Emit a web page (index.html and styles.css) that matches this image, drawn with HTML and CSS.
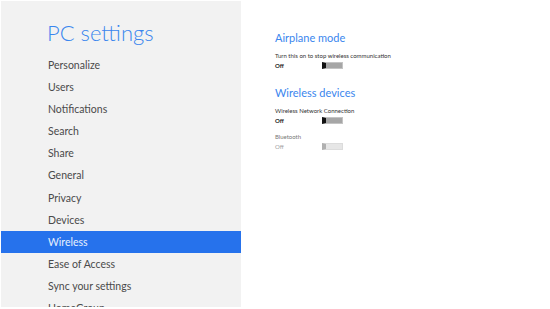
FILE: index.html
```html
<!DOCTYPE html>
<html lang="en">
<head>
    <meta charset="UTF-8">
    <title>PC settings</title>
    <link rel="stylesheet" href="styles.css">
</head>
<body>
    <div class="screen">
        <nav class="sidebar">
            <h1 class="title">PC settings</h1>
            <ul class="menu">
                <li>Personalize</li>
                <li>Users</li>
                <li>Notifications</li>
                <li>Search</li>
                <li>Share</li>
                <li>General</li>
                <li>Privacy</li>
                <li>Devices</li>
                <li class="active">Wireless</li>
                <li>Ease of Access</li>
                <li>Sync your settings</li>
                <li>HomeGroup</li>
            </ul>
        </nav>

        <main class="content">
            <h2 class="section">Airplane mode</h2>
            <div class="setting">
                <div class="label">Turn this on to stop wireless communication</div>
                <div class="row">
                    <span class="state">Off</span>
                    <span class="toggle"></span>
                </div>
            </div>

            <h2 class="section">Wireless devices</h2>
            <div class="setting">
                <div class="label">Wireless Network Connection</div>
                <div class="row">
                    <span class="state">Off</span>
                    <span class="toggle"></span>
                </div>
            </div>
            <div class="setting disabled">
                <div class="label">Bluetooth</div>
                <div class="row">
                    <span class="state">Off</span>
                    <span class="toggle"></span>
                </div>
            </div>
        </main>
    </div>
</body>
</html>
```

FILE: styles.css
```css
body {
    margin: 0;
    padding: 0;
    background-color: #ffffff;
    font-family: 'Lato', 'Open Sans', sans-serif;
    overflow: hidden;
}
.screen {
    display: flex;
    height: 309px;
    padding: 1px 0 2px 1px;
    box-sizing: border-box;
}
.sidebar {
    width: 240px;
    background-color: #f2f2f2;
    overflow: hidden;
    flex-shrink: 0;
}
.title {
    margin: 17px 0 0 46px;
    font-size: 22px;
    font-weight: 300;
    color: #3a86ee;
    line-height: 30px;
}
.menu {
    list-style: none;
    margin: 6px 0 0 0;
    padding: 0;
}
.menu li {
    height: 22.1px;
    line-height: 22px;
    padding-left: 47px;
    font-size: 10.5px;
    color: #4a4a4a;
}
.menu li.active {
    background-color: #2672ec;
    color: #e8f0fd;
}
.content {
    padding: 28px 0 0 34px;
}
.section {
    margin: 0 0 3.5px 0;
    font-size: 11px;
    font-weight: 400;
    color: #3a86ee;
    line-height: 18px;
}
.setting {
    margin-bottom: 6px;
}
.setting + .section {
    margin-top: 13.5px;
}
.label {
    font-size: 6px;
    color: #333333;
    line-height: 9px;
}
.row {
    display: flex;
    align-items: center;
    height: 11px;
}
.state {
    width: 47px;
    font-size: 6px;
    font-weight: 700;
    color: #222222;
}
.toggle {
    width: 21px;
    height: 7px;
    box-sizing: border-box;
    background-color: #a6a6a6;
    border: 1px solid #c4c4c4;
    border-left: 4px solid #111111;
}
.disabled .label {
    color: #777777;
}
.disabled .state {
    font-weight: 400;
    color: #a0a0a0;
}
.disabled .toggle {
    background-color: #e6e6e6;
    border-color: #dcdcdc;
    border-left-color: #b0b0b0;
}
```
